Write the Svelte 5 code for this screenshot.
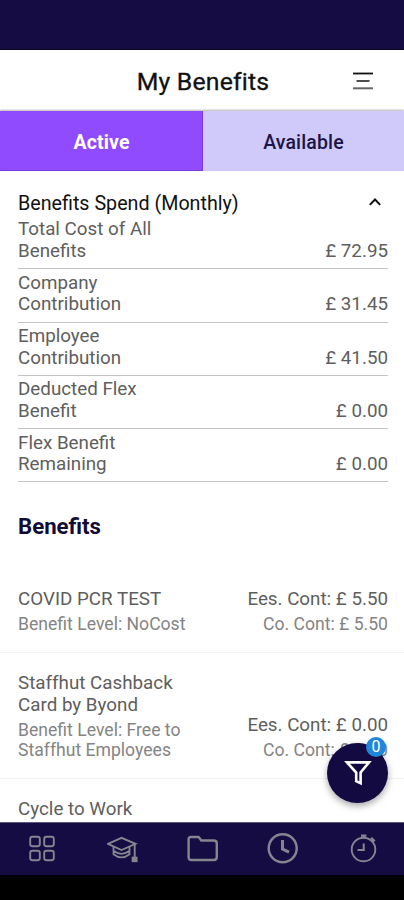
<script lang="ts">
interface SpendRow {
	label: string;
	amount: string;
}

interface Benefit {
	name: string;
	level?: string;
	employee?: string;
	company?: string;
}

const spend: SpendRow[] = [
	{ label: "Total Cost of All Benefits", amount: "72.95" },
	{ label: "Company Contribution", amount: "31.45" },
	{ label: "Employee Contribution", amount: "41.50" },
	{ label: "Deducted Flex Benefit", amount: "0.00" },
	{ label: "Flex Benefit Remaining", amount: "0.00" },
];

const benefits: Benefit[] = [
	{ name: "COVID PCR TEST", level: "NoCost", employee: "5.50", company: "5.50" },
	{
		name: "Staffhut Cashback Card by Byond",
		level: "Free to Staffhut Employees",
		employee: "0.00",
		company: "0.00",
	},
	{ name: "Cycle to Work" },
];

let activeTab = $state("Active");
let expanded = $state(true);
const filterCount = 0;
</script>

<div class="screen">
	<div class="status-bar"></div>

	<header class="header">
		<h1>My Benefits</h1>
		<button class="menu" aria-label="Menu">
			<svg width="22" height="20" viewBox="0 0 22 20">
				<path d="M1 2.5h20" stroke="#111" stroke-width="1.8" />
				<path d="M4.5 10h13" stroke="#222" stroke-width="1.6" />
				<path d="M1 17.3h20" stroke="#666" stroke-width="2" />
			</svg>
		</button>
	</header>

	<div class="tabs" role="tablist">
		{#each ["Active", "Available"] as tab (tab)}
			<button
				class="tab"
				class:selected={activeTab === tab}
				role="tab"
				aria-selected={activeTab === tab}
				onclick={() => (activeTab = tab)}
			>
				{tab}
			</button>
		{/each}
	</div>

	<main class="content">
		<button class="spend-toggle" onclick={() => (expanded = !expanded)}>
			<span>Benefits Spend (Monthly)</span>
			<svg class:closed={!expanded} width="14" height="10" viewBox="0 0 14 10">
				<path d="M1.8 6.9 7 1.5 12.2 6.9" fill="none" stroke="#111" stroke-width="2" />
			</svg>
		</button>

		{#if expanded}
			<ul class="spend">
				{#each spend as row (row.label)}
					<li>
						<span class="label">{row.label}</span>
						<span class="amount">£ {row.amount}</span>
					</li>
				{/each}
			</ul>
		{/if}

		<h2>Benefits</h2>

		<ul class="benefits">
			{#each benefits as b (b.name)}
				<li>
					<div class="info">
						<p class="name">{b.name}</p>
						{#if b.level}
							<p class="sub">Benefit Level: {b.level}</p>
						{/if}
					</div>
					{#if b.employee}
						<div class="costs">
							<p class="name">Ees. Cont: £ {b.employee}</p>
							<p class="sub">Co. Cont: £ {b.company}</p>
						</div>
					{/if}
				</li>
			{/each}
		</ul>

		<!-- Floating filter button -->
		<button class="filter" aria-label="Filter">
			<svg width="28" height="26" viewBox="0 0 28 26">
				<path
					d="M3 2.4h22L16.6 12.5v10.7l-4.4-2V12.5Z"
					fill="none"
					stroke="#fff"
					stroke-width="2.6"
				/>
			</svg>
			<span class="badge">{filterCount}</span>
		</button>
	</main>

	<nav class="nav">
		<!-- Dashboard -->
		<svg width="32" height="32" viewBox="0 0 32 32">
			<rect x="4.2" y="3.7" width="9.6" height="9.6" rx="2.2" />
			<rect x="18.2" y="3.7" width="9.6" height="9.6" rx="2.2" />
			<rect x="4.2" y="17.7" width="9.6" height="9.6" rx="2.2" />
			<rect x="18.2" y="17.7" width="9.6" height="9.6" rx="2.2" />
		</svg>
		<!-- Learning -->
		<svg width="32" height="32" viewBox="0 0 32 32">
			<path d="M1 10.8 14.5 4.8 28.5 10.8 14.5 17Z" />
			<path d="M6.5 14v3.8q8 6 16 0V14M6.5 17.8v3.4q8 6.4 16 0v-3.4" stroke-width="1.8" />
			<path d="M27.7 11v14" />
			<rect x="25.6" y="24.6" width="4" height="3.6" fill="#85858f" />
		</svg>
		<!-- Documents -->
		<svg width="32" height="32" viewBox="0 0 32 32">
			<path
				d="M3.6 4h7.2q1 0 1.6.9l1.8 2.6h12.6q3 0 3 3V24q0 3-3 3H4.6q-3 0-3-3V6q0-2 2-2Z"
				stroke-width="2.4"
			/>
		</svg>
		<!-- History -->
		<svg width="32" height="32" viewBox="0 0 32 32">
			<circle cx="15.7" cy="15.3" r="14" stroke-width="2.5" />
			<path d="M15.5 7v9l6.5 3.2" stroke-width="3" />
		</svg>
		<!-- Timer -->
		<svg width="32" height="32" viewBox="0 0 32 32">
			<circle cx="15.5" cy="16.5" r="11.8" />
			<path d="M15.7 10.5v6.5H9.5" stroke-width="2.1" />
			<path d="M13 2.7h5.4M15.7 2.5v3M23.2 4.7l3.5 3.5M25.2 6l-2 2.2" stroke-width="2.3" />
		</svg>
	</nav>
	<div class="gesture-bar"></div>
</div>

<style>
	:global(body) {
		margin: 0;
	}

	.screen {
		display: flex;
		flex-direction: column;
		width: 404px;
		height: 900px;
		overflow: hidden;
		background: #fff;
		font-family: Roboto, "Liberation Sans", sans-serif;
		color: #5e5e5e;
	}

	h1,
	h2,
	p,
	ul {
		margin: 0;
		padding: 0;
	}

	ul {
		list-style: none;
	}

	button {
		border: 0;
		padding: 0;
		background: none;
		font: inherit;
		color: inherit;
	}

	svg {
		display: block;
		flex: none;
	}

	.status-bar {
		flex: none;
		box-sizing: border-box;
		height: 50px;
		background: #150c43;
		border-bottom: 1px solid #08041f;
	}

	.header {
		flex: none;
		display: grid;
		grid-template-columns: 52px 1fr 52px;
		align-items: center;
		height: 61px;
	}

	h1 {
		grid-column: 2;
		padding: 1px 0 0 2px;
		text-align: center;
		font-size: 24.8px;
		font-weight: 400;
		letter-spacing: 0.2px;
		color: #111;
		-webkit-text-stroke: 0.3px #111;
	}

	.tabs {
		flex: none;
		display: flex;
		height: 60px;
		box-shadow: 0 -1px 2px rgba(0, 0, 0, 0.3);
	}

	.tab {
		flex: 1;
		padding-top: 2px;
		background: #cfcafa;
		color: #1b1547;
		font-size: 19.5px;
		font-weight: 500;
		letter-spacing: 0.15px;
	}

	.tab.selected {
		flex: 0 0 203px;
		background: #914bff;
		box-shadow: inset -1px -1px #7a3be0;
		color: #fff;
		font-weight: 700;
	}

	.content {
		position: relative;
		flex: 1;
		min-height: 0;
		padding: 0 16px 0 18px;
	}

	.spend-toggle {
		display: flex;
		align-items: center;
		justify-content: space-between;
		width: 100%;
		height: 26px;
		margin-top: 19px;
		padding-right: 6px;
		box-sizing: border-box;
		font-size: 19.7px;
		color: #111;
	}

	.closed {
		transform: rotate(180deg);
	}

	.spend li {
		display: flex;
		align-items: flex-end;
		justify-content: space-between;
		box-sizing: border-box;
		height: 53.3px;
		padding-bottom: 5.8px;
		border-bottom: 1px solid #c4c4c4;
		font-size: 18.8px;
		line-height: 21.6px;
	}

	.label {
		width: 150px;
	}

	h2 {
		margin-top: 29.8px;
		font-size: 22.2px;
		font-weight: 700;
		line-height: 28px;
		color: #120c35;
	}

	.benefits {
		margin: 28.5px -16px 0 -18px;
	}

	.benefits li {
		display: flex;
		align-items: flex-end;
		justify-content: space-between;
		padding: 20.6px 16px 16.8px 18px;
		border-bottom: 1px solid #f3f3f3;
	}

	.info {
		width: 180px;
	}

	.costs {
		text-align: right;
		white-space: nowrap;
	}

	.name {
		font-size: 18.8px;
		line-height: 21.6px;
	}

	.sub {
		margin-top: 3.3px;
		font-size: 17.6px;
		line-height: 20.6px;
		color: #848484;
	}

	.filter {
		position: absolute;
		right: 16px;
		bottom: 19px;
		display: grid;
		place-items: center;
		width: 61px;
		height: 60px;
		border-radius: 50%;
		background: #120a40;
		box-shadow: 0 3px 7px rgba(0, 0, 0, 0.35);
	}

	.badge {
		position: absolute;
		top: -6px;
		right: 2px;
		width: 20px;
		height: 20px;
		border-radius: 50%;
		background: #2086da;
		color: #fff;
		font-size: 16px;
		line-height: 20px;
		text-align: center;
	}

	.nav {
		position: relative;
		flex: none;
		display: flex;
		align-items: center;
		justify-content: space-around;
		box-sizing: border-box;
		height: 53px;
		padding-left: 2px;
		background: #150c43;
		border-top: 1px solid #5d587d;
	}

	.nav svg {
		fill: none;
		stroke: #85858f;
		stroke-width: 1.9;
	}

	.gesture-bar {
		position: relative;
		flex: none;
		height: 25px;
		background: #000;
	}
</style>
